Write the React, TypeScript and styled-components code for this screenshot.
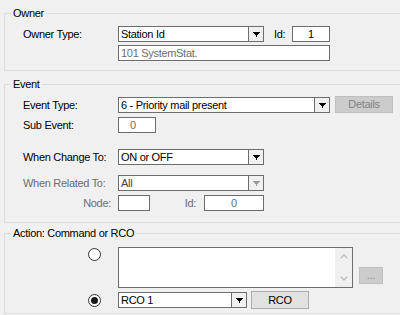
import React from "react";
import styled, { createGlobalStyle } from "styled-components";

const Global = createGlobalStyle`
  html, body { margin: 0; padding: 0; background: #f0f0f0; }
  body {
    font-family: "Liberation Sans", Arial, sans-serif;
    font-size: 11px;
    letter-spacing: -0.3px;
    color: #000;
  }
`;

const Page = styled.div`
  width: 400px;
  height: 315px;
  overflow: hidden;
  background: #f0f0f0;
  padding-left: 4px;
  box-sizing: border-box;
`;

const Group = styled.fieldset<{ $mt: number; $pt: number; $pb: number }>`
  margin: ${(p) => p.$mt}px 0 0 0;
  width: 420px;
  box-sizing: border-box;
  border: 1px solid #dcdcdc;
  padding: ${(p) => p.$pt}px 0 ${(p) => p.$pb}px 6px;
  min-width: 0;
`;

const Legend = styled.legend`
  padding: 0 2px;
  line-height: 13px;
  height: 13px;
  color: #000;
`;

const Body = styled.div`
  display: flex;
  flex-direction: column;
  padding-left: 12px;
`;

const Row = styled.div<{ $mt?: number; $h?: number; $align?: string }>`
  display: flex;
  align-items: ${(p) => p.$align ?? "center"};
  height: ${(p) => p.$h ?? 16}px;
  margin-top: ${(p) => p.$mt ?? 0}px;
`;

const Label = styled.div<{ $muted?: boolean; $right?: boolean; $w?: number; $pr?: number; $pl?: number }>`
  flex: none;
  box-sizing: border-box;
  width: ${(p) => p.$w ?? 95}px;
  text-align: ${(p) => (p.$right ? "right" : "left")};
  padding-right: ${(p) => p.$pr ?? 0}px;
  padding-left: ${(p) => p.$pl ?? 0}px;
  color: ${(p) => (p.$muted ? "#6d6d6d" : "#000")};
  white-space: nowrap;
  line-height: 13px;
`;

const Field = styled.div<{ $w: number; $center?: boolean; $muted?: boolean; $pl?: number }>`
  flex: none;
  box-sizing: border-box;
  width: ${(p) => p.$w}px;
  height: 16px;
  border: 1px solid #6d6d6d;
  background: #fff;
  display: flex;
  align-items: center;
  justify-content: ${(p) => (p.$center ? "center" : "flex-start")};
  padding-left: ${(p) => (p.$center ? 0 : p.$pl ?? 2)}px;
  color: ${(p) => (p.$muted ? "#6d6d6d" : "#000")};
  white-space: nowrap;
  overflow: hidden;
  line-height: 13px;
`;

const Combo = styled.div<{ $w: number }>`
  flex: none;
  box-sizing: border-box;
  width: ${(p) => p.$w}px;
  height: 16px;
  border: 1px solid #6d6d6d;
  background: #fff;
  display: flex;
`;

const ComboText = styled.div<{ $muted?: boolean }>`
  flex: 1;
  display: flex;
  align-items: center;
  padding-left: 2px;
  white-space: nowrap;
  overflow: hidden;
  line-height: 13px;
  color: ${(p) => (p.$muted ? "#444" : "#000")};
`;

const ComboBtn = styled.div`
  flex: none;
  box-sizing: border-box;
  width: 15px;
  border-left: 1px solid #6d6d6d;
  background: #f0f0f0;
  display: flex;
  align-items: center;
  justify-content: center;
  padding-top: 1px;
`;

const Button = styled.div<{ $w: number; $h: number; $disabled?: boolean; $ml?: number }>`
  flex: none;
  box-sizing: border-box;
  width: ${(p) => p.$w}px;
  height: ${(p) => p.$h}px;
  margin-left: ${(p) => p.$ml ?? 0}px;
  display: flex;
  align-items: center;
  justify-content: center;
  background: ${(p) => (p.$disabled ? "#cccccc" : "#e1e1e1")};
  border: 1px solid ${(p) => (p.$disabled ? "#bfbfbf" : "#adadad")};
  color: ${(p) => (p.$disabled ? "#838383" : "#000")};
  line-height: 13px;
`;

const DetailsButton = styled(Button)`
  align-self: flex-end;
`;

const DotsButton = styled(Button)`
  align-self: flex-end;
  margin-bottom: 4px;
`;

const RadioCell = styled.div<{ $pt?: number }>`
  flex: none;
  width: 95px;
  box-sizing: border-box;
  display: flex;
  justify-content: flex-end;
  padding-right: 17px;
  padding-top: ${(p) => p.$pt ?? 0}px;
  align-self: ${(p) => (p.$pt ? "flex-start" : "center")};
`;

const Radio = styled.span<{ $checked?: boolean }>`
  width: 13px;
  height: 13px;
  box-sizing: border-box;
  border-radius: 50%;
  border: 1px solid #333;
  background: #fff;
  display: flex;
  align-items: center;
  justify-content: center;
  &::after {
    content: "";
    width: 7px;
    height: 7px;
    border-radius: 50%;
    background: #1a1a1a;
    display: ${(p) => (p.$checked ? "block" : "none")};
  }
`;

const TextArea = styled.div`
  flex: none;
  box-sizing: border-box;
  width: 235px;
  height: 41px;
  border: 1px solid #6d6d6d;
  background: #fff;
  display: flex;
  justify-content: flex-end;
`;

const ScrollBar = styled.div`
  width: 17px;
  background: #f0f0f0;
  display: flex;
  flex-direction: column;
  justify-content: space-between;
`;

const ScrollArrow = styled.div`
  height: 17px;
  display: flex;
  align-items: center;
  justify-content: center;
`;

const Arrow = ({ color = "#000" }: { color?: string }) => (
  <svg width="7" height="5" viewBox="0 0 7 5" shapeRendering="crispEdges">
    <path d="M0 0h7v1h-1v1h-1v1h-1v2h-1v-2h-1v-1h-1v-1h-1z" fill={color} />
  </svg>
);

const Chevron = ({ up }: { up?: boolean }) => (
  <svg width="8" height="5" viewBox="0 0 8 5">
    <polyline
      points={up ? "0.8,4.3 4,1 7.2,4.3" : "0.8,0.7 4,4 7.2,0.7"}
      fill="none"
      stroke="#bdbdbd"
      strokeWidth="1.3"
    />
  </svg>
);

const Select = ({ w, value, muted }: { w: number; value: string; muted?: boolean }) => (
  <Combo $w={w}>
    <ComboText $muted={muted}>{value}</ComboText>
    <ComboBtn>
      <Arrow color={muted ? "#9a9a9a" : "#000"} />
    </ComboBtn>
  </Combo>
);

export default function App() {
  return (
    <>
      <Global />
      <Page>
        <Group $mt={7} $pt={6} $pb={9}>
          <Legend>Owner</Legend>
          <Body>
            <Row>
              <Label>Owner Type:</Label>
              <Select w={146} value="Station Id" />
              <Label $w={28} $pl={10}>Id:</Label>
              <Field $w={38} $center>1</Field>
            </Row>
            <Row $mt={3}>
              <Label />
              <Field $w={212} $muted>101 SystemStat.</Field>
            </Row>
          </Body>
        </Group>

        <Group $mt={7} $pt={6} $pb={11}>
          <Legend>Event</Legend>
          <Body>
            <Row>
              <Label>Event Type:</Label>
              <Select w={212} value="6 - Priority mail present" />
              <DetailsButton $w={58} $h={17} $ml={5} $disabled>Details</DetailsButton>
            </Row>
            <Row $mt={4}>
              <Label>Sub Event:</Label>
              <Field $w={38} $muted $pl={11}>0</Field>
            </Row>
            <Row $mt={16}>
              <Label>When Change To:</Label>
              <Select w={146} value="ON or OFF" />
            </Row>
            <Row $mt={10}>
              <Label $muted>When Related To:</Label>
              <Select w={146} value="All" muted />
            </Row>
            <Row $mt={4}>
              <Label $muted $right $pr={7}>Node:</Label>
              <Field $w={32} />
              <Label $muted $right $w={54} $pr={8}>Id:</Label>
              <Field $w={60} $center $muted>0</Field>
            </Row>
          </Body>
        </Group>

        <Group $mt={4} $pt={7} $pb={4}>
          <Legend>Action: Command or RCO</Legend>
          <Body>
            <Row $h={41}>
              <RadioCell $pt={1}>
                <Radio />
              </RadioCell>
              <TextArea>
                <ScrollBar>
                  <ScrollArrow>
                    <Chevron up />
                  </ScrollArrow>
                  <ScrollArrow>
                    <Chevron />
                  </ScrollArrow>
                </ScrollBar>
              </TextArea>
              <DotsButton $w={24} $h={17} $ml={6} $disabled>...</DotsButton>
            </Row>
            <Row $mt={3} $h={18}>
              <RadioCell>
                <Radio $checked />
              </RadioCell>
              <Select w={129} value="RCO 1" />
              <Button $w={58} $h={18} $ml={4}>RCO</Button>
            </Row>
          </Body>
        </Group>
      </Page>
    </>
  );
}
